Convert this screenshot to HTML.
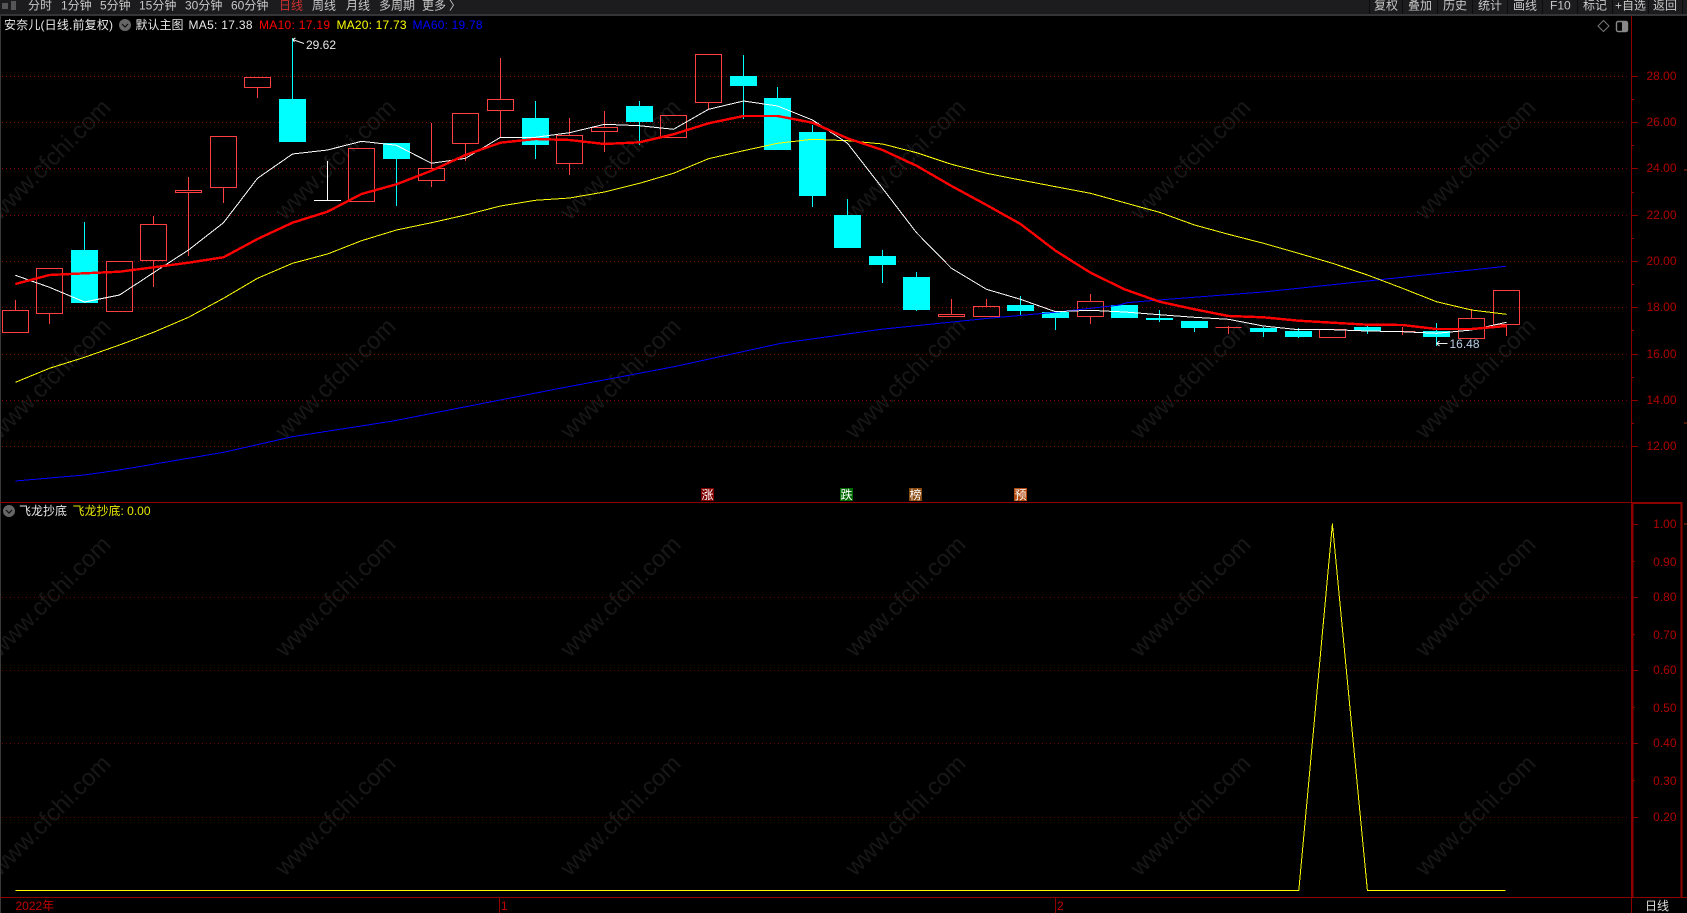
<!DOCTYPE html>
<html><head><meta charset="utf-8"><title>安奈儿</title>
<style>html,body{margin:0;padding:0;background:#000;width:1687px;height:913px;overflow:hidden}svg{display:block}text{font-family:"Liberation Sans","Noto Sans CJK SC",sans-serif;font-size:12px}</style></head>
<body>
<svg width="1687" height="913" viewBox="0 0 1687 913" xmlns="http://www.w3.org/2000/svg">
<rect width="1687" height="913" fill="#000"/>
<!-- watermarks -->
<g fill="#fff" fill-opacity=".09" text-anchor="middle" style="letter-spacing:0">
<text style="font-size:24px" transform="translate(56 165) rotate(-45)">www.cfchi.com</text>
<text style="font-size:24px" transform="translate(341 165) rotate(-45)">www.cfchi.com</text>
<text style="font-size:24px" transform="translate(626 165) rotate(-45)">www.cfchi.com</text>
<text style="font-size:24px" transform="translate(911 165) rotate(-45)">www.cfchi.com</text>
<text style="font-size:24px" transform="translate(1196 165) rotate(-45)">www.cfchi.com</text>
<text style="font-size:24px" transform="translate(1481 165) rotate(-45)">www.cfchi.com</text>
<text style="font-size:24px" transform="translate(56 384) rotate(-45)">www.cfchi.com</text>
<text style="font-size:24px" transform="translate(341 384) rotate(-45)">www.cfchi.com</text>
<text style="font-size:24px" transform="translate(626 384) rotate(-45)">www.cfchi.com</text>
<text style="font-size:24px" transform="translate(911 384) rotate(-45)">www.cfchi.com</text>
<text style="font-size:24px" transform="translate(1196 384) rotate(-45)">www.cfchi.com</text>
<text style="font-size:24px" transform="translate(1481 384) rotate(-45)">www.cfchi.com</text>
<text style="font-size:24px" transform="translate(56 602) rotate(-45)">www.cfchi.com</text>
<text style="font-size:24px" transform="translate(341 602) rotate(-45)">www.cfchi.com</text>
<text style="font-size:24px" transform="translate(626 602) rotate(-45)">www.cfchi.com</text>
<text style="font-size:24px" transform="translate(911 602) rotate(-45)">www.cfchi.com</text>
<text style="font-size:24px" transform="translate(1196 602) rotate(-45)">www.cfchi.com</text>
<text style="font-size:24px" transform="translate(1481 602) rotate(-45)">www.cfchi.com</text>
<text style="font-size:24px" transform="translate(56 821) rotate(-45)">www.cfchi.com</text>
<text style="font-size:24px" transform="translate(341 821) rotate(-45)">www.cfchi.com</text>
<text style="font-size:24px" transform="translate(626 821) rotate(-45)">www.cfchi.com</text>
<text style="font-size:24px" transform="translate(911 821) rotate(-45)">www.cfchi.com</text>
<text style="font-size:24px" transform="translate(1196 821) rotate(-45)">www.cfchi.com</text>
<text style="font-size:24px" transform="translate(1481 821) rotate(-45)">www.cfchi.com</text>
</g>
<rect width="1687" height="14" fill="#1c1c1e"/>
<rect y="14" width="1687" height="2" fill="#353537"/>
<rect x="0" y="16" width="1" height="897" fill="#3a3a3a"/>
<g stroke="#0c0c0c" stroke-width="1"><path d="M1369.5 0V14M1402.5 0V14M1437.5 0V14M1472.5 0V14M1507.5 0V14M1542.5 0V14M1577.5 0V14M1612.5 0V14M1648.5 0V14M1682.5 0V14"/></g>
<path d="M2 3h6v6H2zM11 1h5v9h-5z" fill="#555"/>
<g fill="#c8c8c8">
<text x="28" y="9.5">分时</text><text x="61" y="9.5">1分钟</text><text x="100" y="9.5">5分钟</text><text x="139" y="9.5">15分钟</text><text x="185" y="9.5">30分钟</text><text x="231" y="9.5">60分钟</text>
<text x="279" y="9.5" fill="#d03030">日线</text><text x="312" y="9.5">周线</text><text x="346" y="9.5">月线</text><text x="379" y="9.5">多周期</text><text x="422" y="9.5">更多</text><text x="449" y="9.5">〉</text>
<text x="1374" y="9.5">复权</text><text x="1408" y="9.5">叠加</text><text x="1443" y="9.5">历史</text><text x="1478" y="9.5">统计</text><text x="1513" y="9.5">画线</text><text x="1550" y="9.5">F10</text><text x="1583" y="9.5">标记</text><text x="1615" y="9.5">+自选</text><text x="1653" y="9.5">返回</text>
</g>
<!-- grid -->
<g stroke="#8a0000" stroke-width="1" stroke-dasharray="1 3" fill="none">
<path d="M2 76.5H1629M2 122.5H1629M2 168.5H1629M2 215.5H1629M2 261.5H1629M2 307.5H1629M2 354.5H1629M2 400.5H1629M2 446.5H1629"/>
</g>
<g stroke="#6a0000" stroke-width="1" stroke-dasharray="1 3" fill="none">
<path d="M2 597.5H1629M2 670.5H1629M2 743.5H1629M2 817.5H1629"/>
</g>
<!-- axes -->
<g fill="none" stroke="#8c0000">
<path d="M1631.5 16V913"/>
<path d="M0 502.5H1631M0 897.5H1687"/>
<path d="M1631 76.5h7M1631 122.5h7M1631 168.5h7M1631 215.5h7M1631 261.5h7M1631 307.5h7M1631 354.5h7M1631 400.5h7M1631 446.5h7M1631 99.5h3M1631 145.5h3M1631 192.5h3M1631 238.5h3M1631 284.5h3M1631 330.5h3M1631 377.5h3M1631 423.5h3"/>
<path d="M1633 524.5h5M1633 561.5h2M1633 597.5h5M1633 634.5h2M1633 670.5h5M1633 707.5h2M1633 743.5h5M1633 780.5h2M1633 817.5h5"/>
<path d="M499.5 897V913M1055.5 897V913"/>
<path d="M1632 503h49.5v394" stroke-width="2"/>
<path d="M1632.5 503V897" stroke-width="2"/>
</g>
<path d="M1684 170h3M1684 423h3M1684 524h3" stroke="#a03000"/>
<g fill="#b00000" text-anchor="end">
<text x="1676.5" y="80">28.00</text><text x="1676.5" y="126">26.00</text><text x="1676.5" y="172">24.00</text><text x="1676.5" y="219">22.00</text><text x="1676.5" y="265">20.00</text><text x="1676.5" y="311">18.00</text><text x="1676.5" y="358">16.00</text><text x="1676.5" y="404">14.00</text><text x="1676.5" y="450">12.00</text>
<text x="1676.5" y="528">1.00</text><text x="1676.5" y="566">0.90</text><text x="1676.5" y="601">0.80</text><text x="1676.5" y="639">0.70</text><text x="1676.5" y="674">0.60</text><text x="1676.5" y="712">0.50</text><text x="1676.5" y="747">0.40</text><text x="1676.5" y="785">0.30</text><text x="1676.5" y="821">0.20</text>
</g>
<!-- candles -->
<path fill="none" stroke="#ff4040" stroke-width="1" shape-rendering="crispEdges" d="
M2.5 310.5h26v22h-26zM15.5 300v10
M36.5 268.5h26v45h-26zM49.5 314v10
M106.5 261.5h26v50h-26z
M140.5 224.5h26v36h-26zM153.5 216v8M153.5 261v26
M175.5 190.5h26v2h-26zM188.5 177v13M188.5 193v63
M210.5 136.5h26v51h-26zM223.5 188v15
M244.5 77.5h26v10h-26zM257.5 88v10
M348.5 148.5h26v53h-26z
M418.5 168.5h26v12h-26zM431.5 123v45M431.5 181v6
M452.5 113.5h26v30h-26zM465.5 144v17
M487.5 99.5h26v11h-26zM500.5 58v41M500.5 111v26
M556.5 135.5h26v28h-26zM569.5 118v17M569.5 164v11
M591.5 127.5h26v4h-26zM604.5 111v16M604.5 132v20
M660.5 115.5h26v22h-26z
M695.5 54.5h26v48h-26zM708.5 103v7
M938.5 314.5h26v2h-26zM951.5 299v15
M973.5 306.5h26v10h-26zM986.5 299v7
M1077.5 301.5h26v15h-26zM1090.5 294v7M1090.5 317v7
M1215.5 327.5h26M1228.5 326v8
M1319.5 329.5h26v8h-26z
M1389.5 331.5h26M1402.5 327v8
M1458.5 318.5h26v20h-26zM1471.5 309v9
M1493.5 290.5h26v34h-26zM1506.5 325v11"/>
<path fill="none" stroke="#00ffff" stroke-width="1" shape-rendering="crispEdges" d="M84.5 222v28M292.5 38v61M396.5 159v47M535.5 101v17M535.5 145v14M639.5 101v5M639.5 122v23M743.5 55v21M743.5 86v33M777.5 87v11M812.5 125v7M812.5 196v11M847.5 199v16M882.5 250v6M882.5 265v18M916.5 272v5M916.5 310v1M1020.5 296v9M1020.5 311v4M1055.5 318v12M1159.5 310v8M1159.5 320v2M1194.5 328v4M1263.5 327v1M1263.5 332v5M1298.5 328v3M1298.5 337v1M1367.5 326v1M1367.5 331v3M1436.5 323v8M1436.5 337v9"/>
<path fill="#00ffff" shape-rendering="crispEdges" d="M71 250h27v53h-27zM279 99h27v43h-27zM383 143h27v16h-27zM522 118h27v27h-27zM626 106h27v16h-27zM730 76h27v10h-27zM764 98h27v52h-27zM799 132h27v64h-27zM834 215h27v33h-27zM869 256h27v9h-27zM903 277h27v33h-27zM1007 305h27v6h-27zM1042 312h27v6h-27zM1111 305h27v13h-27zM1146 318h27v2h-27zM1181 321h27v7h-27zM1250 328h27v4h-27zM1285 331h27v6h-27zM1354 327h27v4h-27zM1423 331h27v6h-27z"/>
<path fill="none" stroke="#fff" d="M327.5 161V200.5M314 200.5h27" shape-rendering="crispEdges"/>
<!-- MA lines -->
<g fill="none" shape-rendering="crispEdges" stroke-linejoin="round">
<polyline stroke="#0000ff" stroke-width="1" points="15.4,481 84.3,475 119.3,470 223.6,452.3 292.5,436.7 393,421 560,388.3 674,366.7 781,343.3 881,329.3 988.6,318.3 1055,312.3 1120,305 1127,302.7 1159,300 1263,292 1377,280 1506,266.3"/>
<polyline stroke="#ffff00" stroke-width="1" points="15.4,382.3 49.5,368.3 84.5,357.3 119.5,345 153.5,332.3 188.5,317.3 223.5,298.3 257.5,278.3 292.5,263.3 327.5,254 361.5,240.7 396.5,230 431.5,222.7 465.5,215 500.5,206 535.5,200.3 569.5,198 604.5,192 639.5,183.3 673.5,173.3 708.5,158.7 743.5,150.7 777.5,143.3 812.5,139.3 847.5,140.7 882.5,144 916.5,152.7 951.5,164.3 986.5,173.3 1020.5,180 1055.5,186.7 1090.5,193.3 1124.5,202.7 1159.5,212.3 1194.5,225 1228.5,234.3 1263.5,243.3 1298.5,253.3 1332.5,263.3 1367.5,275 1402.5,288.3 1436.5,301.7 1471.5,310 1506.5,314.3"/>
<polyline stroke="#ffffff" stroke-width="1" points="15.4,275.3 49.5,287.3 84.5,302 119.5,295 153.5,272.7 188.5,250 223.5,222.7 257.5,178.3 292.5,154 327.5,150 361.5,141.3 396.5,145.3 431.5,163.3 465.5,158.3 500.5,137.3 535.5,137.3 569.5,132.7 604.5,124.3 639.5,125.7 673.5,129.3 708.5,109.3 743.5,101 777.5,106 812.5,120 847.5,143.3 882.5,188.3 916.5,232.7 951.5,268.3 986.5,289.3 1020.5,299.3 1055.5,311.7 1090.5,310.3 1124.5,312 1159.5,314.7 1194.5,317.3 1228.5,319.3 1263.5,326 1298.5,329.7 1332.5,329.7 1367.5,331 1402.5,331.7 1436.5,333.3 1471.5,330 1506.5,322.3"/>
<polyline stroke="#ff0000" stroke-width="2.4" points="15.4,284 49.5,275 84.5,273.3 119.5,271.7 153.5,267.3 188.5,262.7 223.5,257.3 257.5,239 292.5,222.7 327.5,211.7 361.5,194 396.5,184.3 431.5,170.7 465.5,155 500.5,142.7 535.5,139 569.5,140 604.5,144 639.5,142.3 673.5,134.3 708.5,123.3 743.5,116 777.5,116 812.5,122.7 847.5,138.3 882.5,150 916.5,165.7 951.5,186 986.5,205 1020.5,224 1055.5,250.7 1090.5,272.7 1124.5,289.3 1159.5,301.7 1194.5,309.3 1228.5,316 1263.5,317.3 1298.5,320.7 1332.5,322.7 1367.5,324.7 1402.5,325 1436.5,329 1471.5,329 1506.5,326"/>
<polyline stroke="#ffff00" stroke-width="1" points="15.4,890.5 1298.8,890.5 1332.4,524 1367.4,890.5 1505.6,890.5"/>
</g>
<!-- markers -->
<path fill="none" stroke="#eee" d="M292.5 39.5l11.5 4M292.5 39.5l3-1.5M292.5 39.5l2 2.5"/>
<text x="306" y="49" fill="#e8e8e8">29.62</text>
<path fill="none" stroke="#eee" d="M1436.5 343.5h11M1436.5 343.5l3-2.5M1436.5 343.5l3 2.5"/>
<text x="1449.5" y="348" fill="#b8cfe8">16.48</text>
<!-- badges -->
<rect x="701" y="488" width="13" height="13" fill="#800000"/><rect x="840" y="488" width="13" height="13" fill="#006a00"/><rect x="909" y="488" width="13" height="13" fill="#8a4a10"/><rect x="1014" y="488" width="13" height="13" fill="#b04a10"/>
<g fill="#fff" text-anchor="middle"><text x="707.5" y="499">涨</text><text x="846.5" y="499">跌</text><text x="915.5" y="499">榜</text><text x="1020.5" y="499">预</text></g>
<!-- legend -->
<text x="4" y="29" fill="#e8e8e8" textLength="109">安奈儿(日线.前复权)</text>
<circle cx="125" cy="25" r="6" fill="#666"/><path d="M122 24l3 3 3-3" fill="none" stroke="#111" stroke-width="1.2"/>
<text x="135.5" y="29" fill="#e8e8e8">默认主图</text>
<text x="188.5" y="29" fill="#e8e8e8" textLength="64">MA5: 17.38</text>
<text x="259" y="29" fill="#ff0000" textLength="71">MA10: 17.19</text>
<text x="336.5" y="29" fill="#ffff00" textLength="70">MA20: 17.73</text>
<text x="412.5" y="29" fill="#0000ff" textLength="70">MA60: 19.78</text>
<path d="M1603.5 20.5l5.5 5.5-5.5 5.5-5.5-5.5z" fill="none" stroke="#777"/>
<rect x="1616.5" y="21.5" width="11" height="10" rx="1.5" fill="none" stroke="#888" stroke-width="1.4"/><rect x="1622" y="22" width="5" height="9" fill="#888"/>
<circle cx="9" cy="511" r="6" fill="#666"/><path d="M6 510l3 3 3-3" fill="none" stroke="#111" stroke-width="1.2"/>
<text x="19" y="515" fill="#e8e8e8">飞龙抄底</text>
<text x="72.5" y="515" fill="#e8e800" textLength="78">飞龙抄底: 0.00</text>
<text x="15.5" y="910" fill="#c00000">2022年</text>
<text x="501" y="910" fill="#c00000">1</text>
<text x="1057" y="910" fill="#c00000">2</text>
<text x="1645" y="910" fill="#dcdcdc">日线</text>
</svg>
</body></html>
